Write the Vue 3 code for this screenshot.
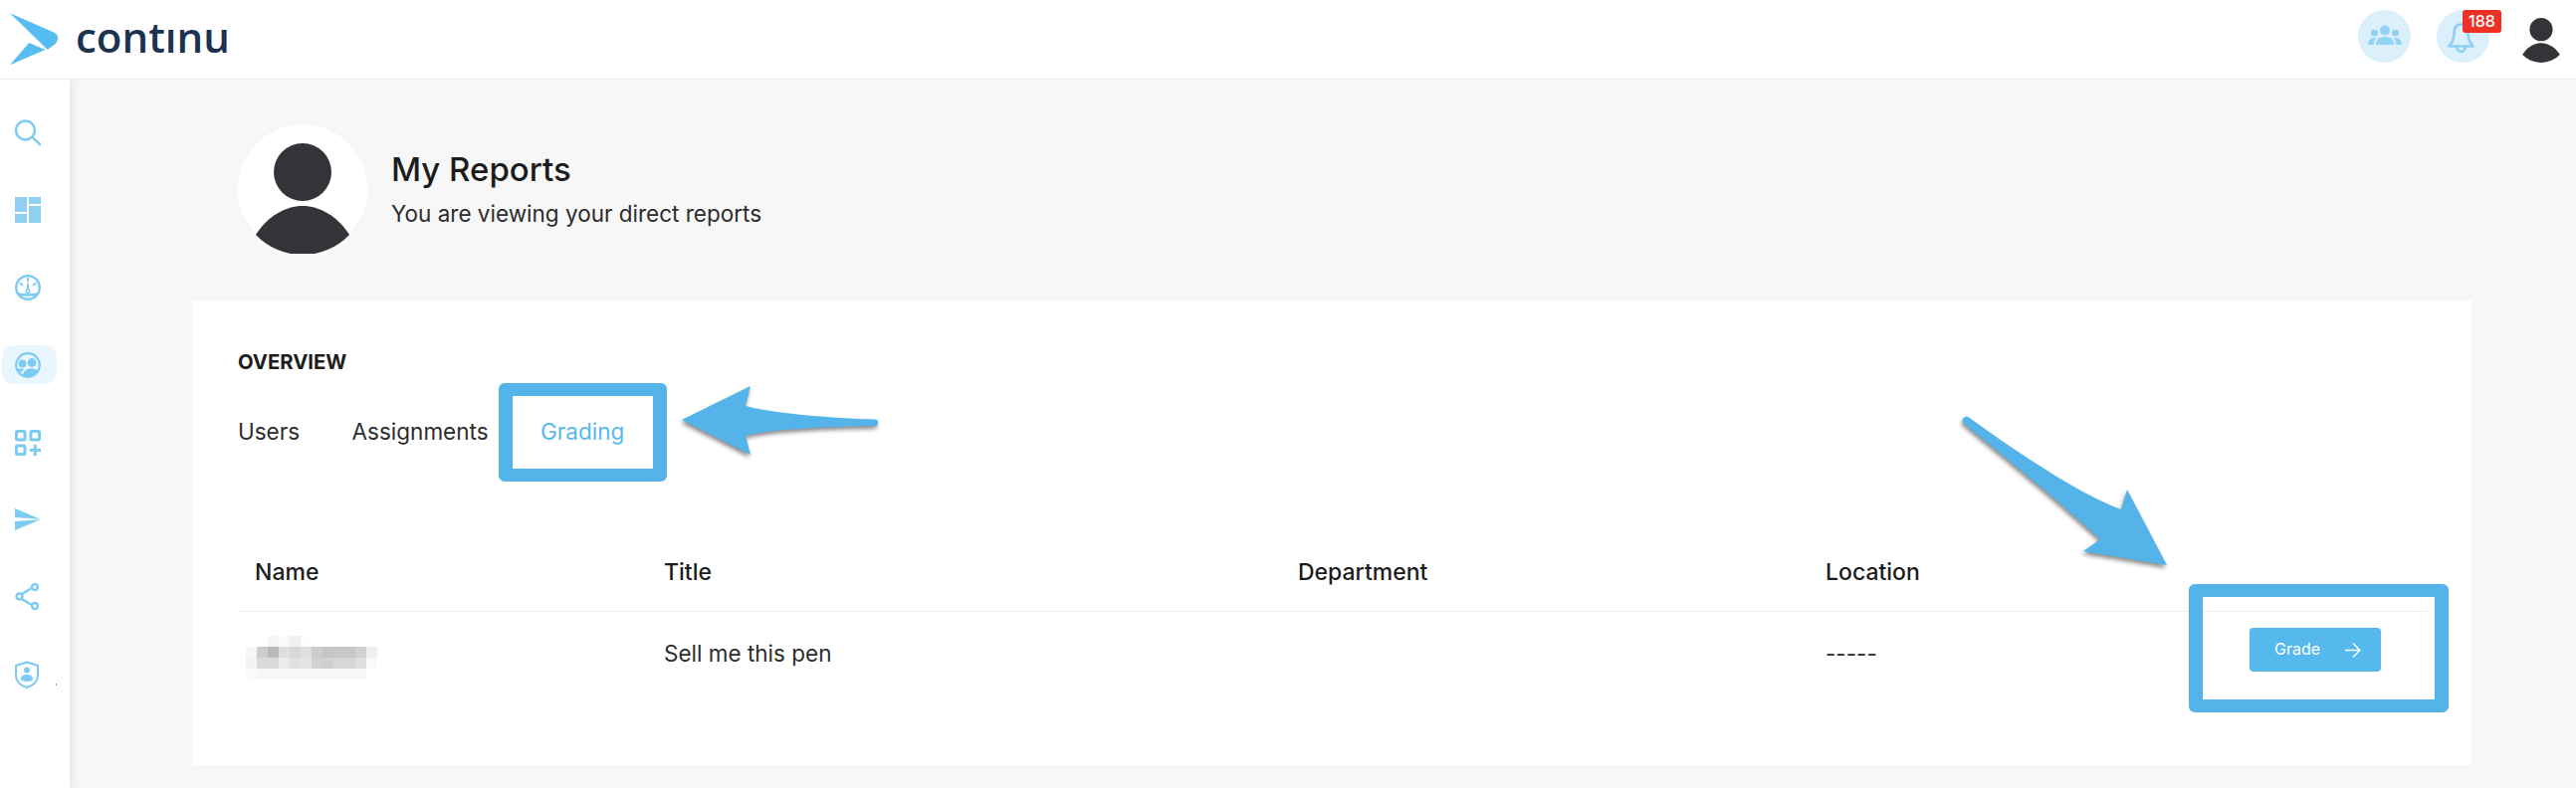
<script setup>
const tabs = ["Users", "Assignments", "Grading"];
const columns = ["Name", "Title", "Department", "Location", ""];

// blurred-out name in the table, gray value per mosaic cell
const mosaic = [
  [255, 255, 245, 250, 240, 252, 255, 255, 255, 255, 255, 255],
  [246, 205, 185, 222, 215, 222, 205, 197, 200, 200, 210, 240],
  [243, 218, 218, 235, 225, 228, 210, 208, 215, 215, 222, 250],
  [250, 247, 247, 248, 248, 248, 248, 248, 248, 248, 248, 255],
];
const cells = mosaic.flat().map((v) => `rgb(${v},${v},${v})`);
</script>

<template>
  <div class="page">
    <header class="topbar">
      <div class="brand">
        <svg class="brand-mark" width="50" height="53" viewBox="0 0 50 53">
          <path d="M0 0.300 L44 19.500 Q48.500 22 48.200 25.500 Q47.800 29 45 31.500 L37.800 37 Z" fill="#56bcf2" />
          <path d="M19.200 30 L35.500 37 L0 52.300 Z" fill="#56bcf2" />
        </svg>
        <span class="brand-name">contınu</span>
      </div>
      <div class="top-actions">
        <div class="round-btn">
          <svg width="34" height="24" viewBox="0 0 34 24" fill="#93d3f5">
            <circle cx="17" cy="5.500" r="5" />
            <circle cx="6.500" cy="8" r="3.500" />
            <circle cx="27.500" cy="8" r="3.500" />
            <path d="M8 20 C8 14 12 12 17 12 C22 12 26 14 26 20 Z" />
            <path d="M0 20 C0 15 3 13 6.500 13 L8 13.500 C6.500 15.500 6 17.500 6 20 Z" />
            <path d="M34 20 C34 15 31 13 27.500 13 L26 13.500 C27.500 15.500 28 17.500 28 20 Z" />
          </svg>
        </div>
        <div class="round-btn bell">
          <svg class="bell-icon" width="27" height="31" viewBox="0 0 27 31" fill="none" stroke="#8ed1f5" stroke-width="2.700" stroke-linejoin="round">
            <path d="M13.500 1.500 C7.500 1.500 6.500 6.500 6.500 10.500 C6.500 16 5 19.500 1.500 23.500 L25.500 23.500 C22 19.500 20.500 16 20.500 10.500 C20.500 6.500 19.500 1.500 13.500 1.500 Z" />
            <path d="M9.500 24 C9.500 30.500 17.500 30.500 17.500 24" />
          </svg>
          <span class="badge">188</span>
        </div>
        <svg class="top-avatar" width="52" height="53" viewBox="0 0 130 130">
          <circle cx="65" cy="65" r="64.500" fill="#fff" stroke="#f0f0f0" />
          <ellipse cx="65" cy="48" rx="29" ry="29" fill="#333438" />
          <path d="M18 111 C30 92 48 82 65 82 C82 82 100 92 112 111 A65 65 0 0 1 18 111 Z" fill="#333438" />
        </svg>
      </div>
    </header>

    <div class="layout">
      <aside class="sidebar">
        <div class="nav-item">
          <svg width="26" height="28" viewBox="0 0 26 28" fill="none" stroke="#7ccbf3" stroke-width="2.400">
            <circle cx="10.500" cy="11" r="9.500" />
            <path d="M17.500 18 L26 26" />
          </svg>
        </div>
        <div class="nav-item">
          <svg width="26" height="26" viewBox="0 0 26 26" fill="#8fd0f2">
            <rect x="0" y="0" width="12" height="15" />
            <rect x="0" y="17" width="12" height="9" />
            <rect x="14" y="0" width="12" height="7" />
            <rect x="14" y="9" width="12" height="17" />
          </svg>
        </div>
        <div class="nav-item">
          <svg width="26" height="26" viewBox="0 0 26 26" fill="none" stroke="#7ccbf3" stroke-width="2.400">
            <circle cx="13" cy="13" r="11.800" />
            <path d="M13 4 V6.500 M5.500 9 L7.500 10.500 M20.500 9 L18.500 10.500" stroke-linecap="round" stroke-width="2" />
            <path d="M12 16 L13 8.500 L14 16 Z" fill="#7ccbf3" stroke-width="1" />
            <circle cx="13" cy="16.500" r="1.800" fill="#fff" stroke-width="1.500" />
            <path d="M3.500 19.500 Q13 21.500 22.500 19.500" />
          </svg>
        </div>
        <div class="nav-item active">
          <svg width="26" height="26" viewBox="0 0 26 26" fill="#7ccbf3">
            <circle cx="13" cy="13" r="11.800" fill="none" stroke="#7ccbf3" stroke-width="2.200" />
            <circle cx="7.500" cy="11.500" r="3.900" />
            <circle cx="17" cy="10.500" r="4.400" />
            <path d="M8 23.500 C8.500 18 13 16.500 17 16.500 C20 16.500 22 17.500 23.500 19 C21 22.500 17.500 24.500 13 24.500 Z" />
            <path d="M2 17 C3 16.500 6 16 9.500 16.800 L6 20.500 Z" />
          </svg>
        </div>
        <div class="nav-item">
          <svg class="apps-icon" width="26" height="26" viewBox="0 0 26 26" fill="none" stroke="#7ccbf3" stroke-width="3">
            <rect x="1.500" y="1.500" width="8.500" height="8.500" rx="1" />
            <rect x="16" y="1.500" width="8.500" height="8.500" rx="1" />
            <rect x="1.500" y="16" width="8.500" height="8.500" rx="1" />
            <path d="M20.300 15 V26 M14.800 20.500 H26" />
          </svg>
        </div>
        <div class="nav-item">
          <svg width="26" height="23" viewBox="0 0 26 23" fill="#7ccbf3">
            <path d="M0 0 L25.500 10.800 L0 9 Z" />
            <path d="M0 22 L25.500 11.200 L0 13 Z" />
          </svg>
        </div>
        <div class="nav-item">
          <svg width="26" height="28" viewBox="0 0 26 28" fill="none" stroke="#7ccbf3" stroke-width="2.400">
            <path d="M7 11 L17 5 M7 16 L17 22" />
            <circle cx="4.500" cy="13.500" r="3" />
            <circle cx="20" cy="4" r="3" />
            <circle cx="20" cy="23" r="3" />
          </svg>
        </div>
        <div class="nav-item">
          <svg width="26" height="28" viewBox="0 0 26 28">
            <path d="M12 1.500 L23 5 V15 C23 21 18 25 12 27 C6 25 1 21 1 15 V5 Z" fill="none" stroke="#7ccbf3" stroke-width="2" stroke-linejoin="round" />
            <circle cx="12" cy="9.500" r="3" fill="#7ccbf3" />
            <path d="M6 18 C6 15 9 14 12 14 C15 14 18 15 18 18 C18 20 15 21 12 21 C9 21 6 20 6 18 Z" fill="#7ccbf3" />
          </svg>
          <span class="speck"></span>
        </div>
      </aside>

      <main class="content">
        <section class="profile">
          <svg class="profile-avatar" width="130" height="130" viewBox="0 0 130 130">
            <circle cx="65" cy="65" r="65" fill="#fff" />
            <ellipse cx="65" cy="48" rx="29" ry="29" fill="#333438" />
            <path d="M18 111 C30 92 48 82 65 82 C82 82 100 92 112 111 A65 65 0 0 1 18 111 Z" fill="#333438" />
          </svg>
          <div class="profile-text">
            <h1>My Reports</h1>
            <p>You are viewing your direct reports</p>
          </div>
        </section>

        <section class="card">
          <h2>OVERVIEW</h2>
          <nav class="tabs">
            <a v-for="tab in tabs" :key="tab" :class="{ current: tab === 'Grading' }">{{ tab }}</a>
          </nav>
          <div class="table">
            <div class="row head">
              <div v-for="col in columns" :key="col" class="cell">{{ col }}</div>
            </div>
            <div class="row body">
              <div class="name-cell">
                <div class="mosaic">
                  <i v-for="(c, i) in cells" :key="i" :style="{ background: c }"></i>
                </div>
              </div>
              <div class="cell">Sell me this pen</div>
              <div class="cell"></div>
              <div class="cell">-----</div>
              <div>
                <button class="grade">
                  <span>Grade</span>
                  <svg width="17" height="17" viewBox="0 0 17 17" fill="none" stroke="#fff" stroke-width="1.300">
                    <path d="M1 8.500 H16 M9 1.500 L16 8.500 L9 15.500" />
                  </svg>
                </button>
              </div>
            </div>
          </div>
        </section>
      </main>
    </div>

    <!-- annotations drawn on top of the screenshot -->
    <div class="mark mark-tab"></div>
    <div class="mark mark-grade"></div>
    <svg class="arrows" width="2588" height="792" viewBox="0 0 2588 792">
      <path class="arrow" d="M685 422 L754 388 L749 408 C775 415 830 420 879 421.500 A3.200 3.200 0 0 1 879 428 C830 429 775 431 749 438 L754 457 Z" />
      <path class="arrow" d="M1978 419.500 C2030 457 2090 497 2131 512 L2137 492 L2177 568 L2093 554 L2110 542 C2070 505 2015 460 1973.500 426 A3.200 3.200 0 0 1 1978 419.500 Z" />
    </svg>
  </div>
</template>

<style scoped>
.page {
  position: relative;
  width: 2588px;
  height: 792px;
  overflow: hidden;
  display: flex;
  flex-direction: column;
  background: #f7f7f7;
  font-family: Inter, "Liberation Sans", sans-serif;
  color: #1c1c1c;
}

.topbar {
  height: 79px;
  flex-shrink: 0;
  display: flex;
  justify-content: space-between;
  align-items: center;
  background: #fff;
  border-bottom: 1px solid #eeeeee;
  position: relative;
  z-index: 2;
}

.brand {
  display: flex;
  align-items: center;
  padding-left: 10px;
}

.brand-name {
  margin-left: 16px;
  margin-top: -6px;
  font-family: "Open Sans", sans-serif;
  font-size: 42px;
  font-weight: 600;
  color: #1b3350;
  line-height: 1;
}

.top-actions {
  display: flex;
  align-items: center;
  gap: 26px;
  padding: 0 9px 6px 0;
}

.round-btn {
  position: relative;
  width: 53px;
  height: 53px;
  border-radius: 50%;
  background: #dcf0fb;
  display: flex;
  align-items: center;
  justify-content: center;
}

.bell-icon {
  margin: 4px 4px 0 0;
}

.badge {
  position: absolute;
  top: 0;
  left: 26px;
  width: 39px;
  height: 23px;
  border-radius: 3px;
  background: #ee3124;
  color: #fff;
  font-size: 16px;
  font-weight: 500;
  line-height: 23px;
  text-align: center;
}

.layout {
  flex: 1;
  display: flex;
  min-height: 0;
}

.sidebar {
  width: 70px;
  flex-shrink: 0;
  box-sizing: border-box;
  padding: 34px 0 0 2px;
  display: flex;
  flex-direction: column;
  gap: 38.800px;
  background: #fff;
  box-shadow: 2px 0 8px rgba(0, 0, 0, 0.09);
  position: relative;
  z-index: 1;
}

.nav-item {
  position: relative;
  width: 55px;
  height: 39px;
  box-sizing: border-box;
  padding-left: 13px;
  display: flex;
  align-items: center;
  border-radius: 12px;
}

.nav-item.active {
  background: #eaf6fe;
}

.apps-icon {
  margin-top: 1px;
}

.speck {
  position: absolute;
  left: 54px;
  top: 28px;
  width: 1px;
  height: 2px;
  background: #999;
}

.content {
  flex: 1;
  min-width: 0;
  padding: 45px 105px 0 123px;
}

.profile {
  display: flex;
  align-items: center;
  padding-left: 46px;
}

.profile-text {
  margin-left: 24px;
}

.profile-text h1 {
  margin: 0;
  font-size: 33px;
  font-weight: 500;
  line-height: 40px;
}

.profile-text p {
  margin: 10px 0 0;
  font-size: 22.500px;
  font-weight: 400;
  line-height: 30px;
  color: #2c2c2c;
}

.card {
  margin-top: 47px;
  height: 467px;
  box-sizing: border-box;
  padding: 50px 45px 0 46px;
  background: #fff;
}

.card h2 {
  margin: 0;
  font-size: 20.300px;
  font-weight: 700;
  line-height: 24px;
}

.tabs {
  display: flex;
  gap: 52.500px;
  margin-top: 43px;
  font-size: 22.500px;
  line-height: 30px;
  color: #2c2c2c;
}

.tabs .current {
  color: #56b9ee;
}

.table {
  margin-top: 111px;
}

.row {
  display: grid;
  grid-template-columns: 428px 637px 530px 426px 178px;
  align-items: center;
}

.row.head {
  font-size: 23px;
  font-weight: 500;
  line-height: 30px;
  padding-bottom: 24px;
  border-bottom: 1px solid #eeeeee;
}

.row.head .cell:first-child {
  padding-left: 17px;
}

.row.body {
  height: 86px;
  font-size: 22.500px;
  color: #2c2c2c;
}

.row.body .cell {
  margin-bottom: 3px;
}

.name-cell {
  padding-left: 8px;
}

.mosaic {
  display: grid;
  grid-template-columns: repeat(12, 11px);
  grid-auto-rows: 11px;
  width: 132px;
  margin-top: 6px;
}

.mosaic i {
  display: block;
}

.grade {
  width: 132px;
  height: 44px;
  margin-bottom: 10px;
  padding: 0 20px 0 25px;
  display: flex;
  align-items: center;
  justify-content: space-between;
  border: none;
  border-radius: 4px;
  background: #56b9ee;
  color: #fff;
  font-family: inherit;
  font-size: 16px;
}

.grade span {
  margin-top: -2px;
}

.mark {
  position: absolute;
  box-sizing: border-box;
  border-style: solid;
  border-color: #54b4e9;
  border-radius: 6px;
  z-index: 3;
}

.mark-tab {
  left: 501px;
  top: 385px;
  width: 169px;
  height: 99px;
  border-width: 13px 14px;
}

.mark-grade {
  left: 2199px;
  top: 587px;
  width: 261px;
  height: 129px;
  border-width: 13.500px 14px;
}

.arrows {
  position: absolute;
  left: 0;
  top: 0;
  z-index: 3;
  pointer-events: none;
}

.arrow {
  fill: #54b4e9;
  filter: drop-shadow(-1px 3px 2px rgba(0, 0, 0, 0.45));
}
</style>
